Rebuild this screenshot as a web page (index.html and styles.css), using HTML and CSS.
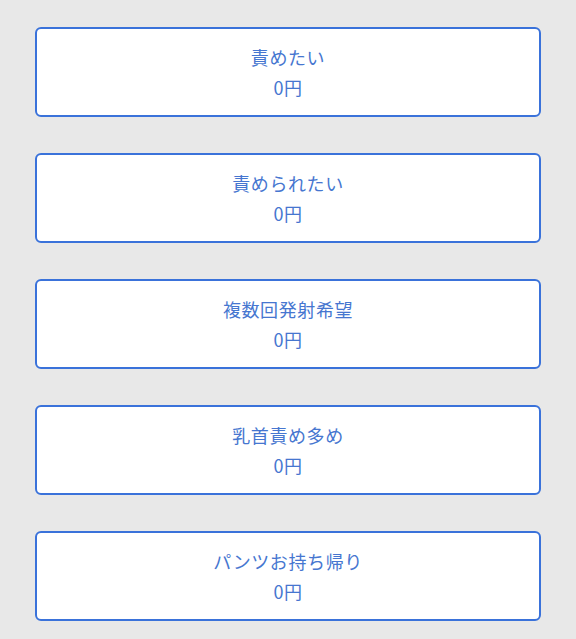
FILE: index.html
```html
<!DOCTYPE html>
<html lang="ja">

<head>
    <meta charset="UTF-8">
    <meta name="viewport" content="width=device-width, initial-scale=1.0">
    <title>オプション</title>
    <link rel="stylesheet" href="styles.css">
</head>

<body>
    <div class="option-list">
        <div class="option">
            <div class="option-name">責めたい</div>
            <div class="option-price">0円</div>
        </div>
        <div class="option">
            <div class="option-name">責められたい</div>
            <div class="option-price">0円</div>
        </div>
        <div class="option">
            <div class="option-name">複数回発射希望</div>
            <div class="option-price">0円</div>
        </div>
        <div class="option">
            <div class="option-name">乳首責め多め</div>
            <div class="option-price">0円</div>
        </div>
        <div class="option">
            <div class="option-name">パンツお持ち帰り</div>
            <div class="option-price">0円</div>
        </div>
    </div>
</body>

</html>
```

FILE: styles.css
```css
body {
    margin: 0;
    background-color: #e8e8e8;
    font-family: "Noto Sans CJK JP", "Noto Sans", sans-serif;
}

.option-list {
    /* ボタンの縦並び */
    display: flex;
    flex-direction: column;
    gap: 36px;
    padding: 27px 35px;
}

.option {
    /* 各オプションのボタン */
    background-color: white;
    border: 2px solid #3a72da;
    border-radius: 6px;
    height: 86px;
    display: flex;
    flex-direction: column;
    justify-content: center;
    align-items: center;
    color: #4676d0;
    font-size: 18px;
    letter-spacing: 0.6px;
    line-height: 30px;
}
```
